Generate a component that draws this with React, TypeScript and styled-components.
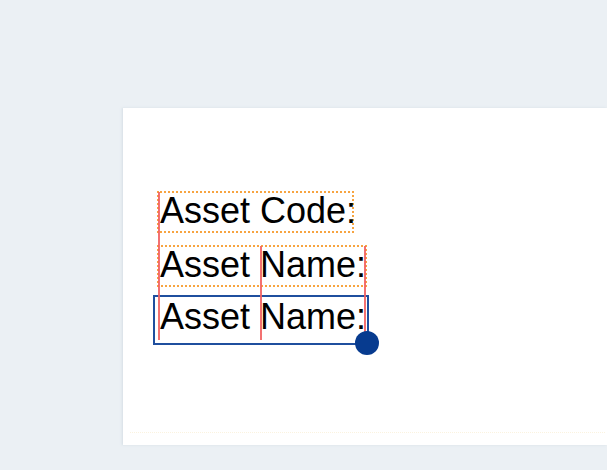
import React from 'react';
import styled, { createGlobalStyle } from 'styled-components';

const GlobalStyle = createGlobalStyle`
  html, body {
    margin: 0;
    padding: 0;
    background: #ebf0f4;
  }
  body {
    font-family: "Liberation Sans", Arial, sans-serif;
  }
`;

const Page = styled.div`
  width: 607px;
  height: 470px;
  overflow: hidden;
  padding: 108px 0 0 123px;
  box-sizing: border-box;
`;

const Board = styled.div`
  position: relative;
  width: 484px;
  height: 337px;
  box-sizing: border-box;
  padding: 83px 0 0 30px;
  background: #ffffff;
  box-shadow: -1px 0 2px rgba(200, 210, 220, 0.6);
`;

const Stack = styled.div`
  display: flex;
  flex-direction: column;
  align-items: flex-start;
  gap: 12px;
`;

const TextBox = styled.div<{ $width: number; $selected?: boolean }>`
  width: ${p => p.$width}px;
  box-sizing: border-box;
  font-size: 36px;
  line-height: 36px;
  color: #000;
  white-space: nowrap;
  border: ${p => (p.$selected ? '2px solid #1f4f9e' : '2px dotted #f7a440')};
  padding: ${p => (p.$selected ? '2px 0 8px 5px' : '0 0 2px 1px')};
  margin: ${p => (p.$selected ? '-4px 0 0 0' : '0 0 0 4px')};
`;

const Guide = styled.div<{ $left: number; $top: number; $height: number }>`
  position: absolute;
  left: ${p => p.$left}px;
  top: ${p => p.$top}px;
  width: 2px;
  height: ${p => p.$height}px;
  background: #f26262;
  opacity: 0.9;
`;

const Handle = styled.div`
  position: absolute;
  left: 232px;
  top: 223px;
  width: 24px;
  height: 24px;
  border-radius: 50%;
  background: #073b8f;
`;

const FaintRule = styled.div`
  position: absolute;
  left: 7px;
  right: 2px;
  top: 324px;
  border-top: 1px dotted #fbf3df;
`;

export default function App() {
  return (
    <>
      <GlobalStyle />
      <Page>
        <Board>
          <Stack>
            <TextBox $width={197}>Asset Code:</TextBox>
            <TextBox $width={210}>Asset Name:</TextBox>
            <TextBox $width={216} $selected>Asset Name:</TextBox>
          </Stack>
          <Guide $left={35} $top={84} $height={148} />
          <Guide $left={137} $top={138} $height={94} />
          <Guide $left={241} $top={138} $height={94} />
          <Handle />
          <FaintRule />
        </Board>
      </Page>
    </>
  );
}
